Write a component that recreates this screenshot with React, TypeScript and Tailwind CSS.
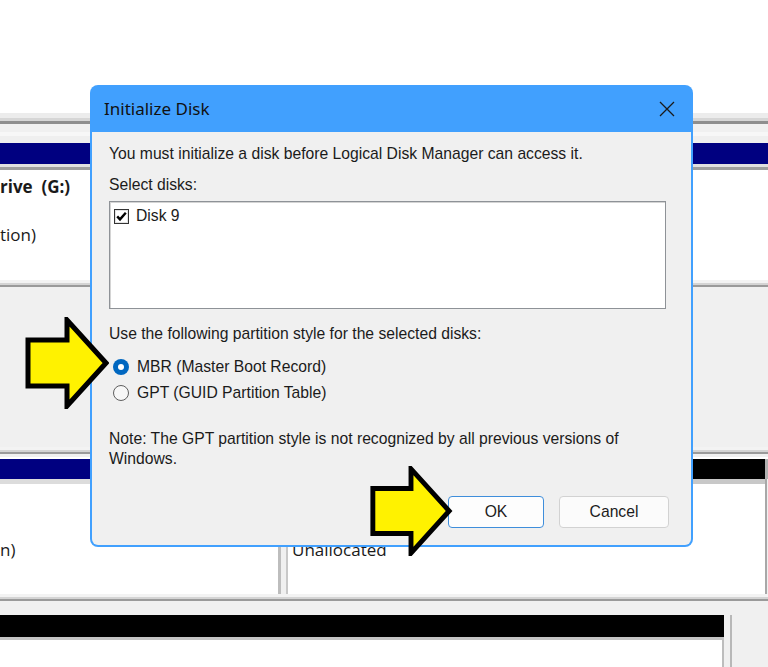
import React from 'react';

// Disk Management window behind the dialog
function Separator() {
  return (
    <div className="flex flex-col">
      <div className="h-[3px] bg-[#f3f3f3]" />
      <div className="h-[2px] bg-[#d4d4d4]" />
      <div className="h-[2px] bg-[#9a9a9a]" />
      <div className="h-[3px] bg-[#f0f0f0]" />
    </div>
  );
}

function Backdrop() {
  return (
    <div className="flex h-[667px] w-[768px] flex-col bg-white font-['Open_Sans',sans-serif] text-[#1a1a1a]">
      <div className="h-[113px] bg-white" />
      {/* toolbar band */}
      <div className="flex h-[30px] flex-col bg-[#efefef]">
        <div className="h-[5px] bg-[#ececec]" />
        <div className="h-[3px] bg-[#d6d6d6]" />
        <div className="h-[3px] bg-[#8e8e8e]" />
        <div className="h-[8px] bg-[#f0f0f0]" />
        <div className="h-[4px] bg-[#f7f7f7]" />
        <div className="flex-1 bg-[#efefef]" />
      </div>
      <div className="h-[21px] bg-[#000080]" />
      <div className="h-[3px] bg-[#e0e0e0]" />
      <div className="h-[3px] bg-[#9e9e9e]" />
      {/* volume panel */}
      <div className="flex h-[110px] flex-col bg-white pt-[5px]">
        <div className="text-[17px] font-bold leading-[24px] whitespace-pre">rive  (G:)</div>
        <div className="mt-[24px] text-[17px] leading-[24px]">tion)</div>
      </div>
      <Separator />
      {/* disk 9 label area */}
      <div className="h-[157px] bg-[#f0f0f0]" />
      <Separator />
      <div className="h-[2px] bg-white" />
      <div className="flex h-[20px]">
        <div className="w-[280px] bg-[#000080]" />
        <div className="w-[6px] bg-white" />
        <div className="w-[479px] bg-black" />
        <div className="flex-1 bg-[#b0b0b0]" />
      </div>
      <div className="flex h-[115px]">
        <div className="flex w-[278px] flex-col border-t-[5px] border-[#dcdcdc] bg-white">
          <div className="mt-[54px] text-[17px] leading-[24px]">n)</div>
        </div>
        <div className="w-[3px] bg-[#bdbdbd]" />
        <div className="w-[5px] bg-[#f0f0f0]" />
        <div className="flex w-[479px] flex-col border-l-2 border-t-[5px] border-[#c8c8c8] bg-white pl-[4px]">
          <div className="mt-[54px] text-[17px] leading-[24px]">Unallocated</div>
        </div>
        <div className="flex-1 border-l-2 border-[#a8a8a8] bg-[#f0f0f0]" />
      </div>
      <Separator />
      <div className="h-[11px] bg-[#f0f0f0]" />
      <div className="flex flex-1">
        <div className="flex w-[724px] flex-col">
          <div className="h-[22px] bg-black" />
          <div className="h-[3px] bg-[#c4c4c4]" />
          <div className="flex-1 border-r-2 border-[#bdbdbd] bg-white" />
        </div>
        <div className="w-[6px] bg-[#f0f0f0]" />
        <div className="w-[2px] bg-[#b8b8b8]" />
        <div className="flex-1 bg-[#f0f0f0]" />
      </div>
    </div>
  );
}

function Arrow({ className }: { className: string }) {
  return (
    <svg viewBox="0 0 84 92" className={className}>
      <path
        d="M3 23 H42 V3 L81 46 L42 89 V69 H3 Z"
        fill="#fff200"
        stroke="#000"
        strokeWidth="5"
        strokeLinejoin="miter"
      />
    </svg>
  );
}

function InitializeDiskDialog() {
  return (
    <div className="absolute left-[90px] top-[85px] flex h-[462px] w-[603px] flex-col overflow-hidden rounded-[8px] bg-[#41a0fe] font-['Liberation_Sans',Arial,sans-serif] text-[15.7px] text-[#1b1b1b]">
      {/* Title bar */}
      <div className="flex h-[47px] items-center justify-between pl-[14px] pr-[18px]">
        <span className="font-['Noto_Sans',sans-serif] text-[17px] text-[#111]">Initialize Disk</span>
        <svg width="16" height="16" viewBox="0 0 16 16">
          <path d="M1 1 L15 15 M15 1 L1 15" stroke="#1a1a1a" strokeWidth="1.3" />
        </svg>
      </div>

      {/* Body */}
      <div className="mx-[2px] mb-[2px] flex flex-1 flex-col rounded-b-[6px] bg-[#f0f0f0] pl-[17px] pr-[22px]">
        <p className="mt-[12px] leading-[20px]">You must initialize a disk before Logical Disk Manager can access it.</p>
        <p className="mt-[11px] leading-[20px]">Select disks:</p>

        <div className="mt-[6px] h-[108px] w-[557px] border border-[#8e9297] bg-white shadow-[inset_1px_1px_0_#d4d4d4]">
          <div className="flex items-center gap-[7px] pl-[4px] pt-[4px]">
            <svg width="15" height="15" viewBox="0 0 15 15">
              <rect x="0.5" y="0.5" width="14" height="14" fill="#fff" stroke="#333" />
              <rect x="1.5" y="1.5" width="12" height="12" fill="none" stroke="#e3e3e3" />
              <path d="M3.2 7.4 L6 10.4 L11.8 3.8" fill="none" stroke="#000" strokeWidth="2.4" />
            </svg>
            <span className="leading-[20px]">Disk 9</span>
          </div>
        </div>

        <p className="mt-[15px] leading-[20px]">Use the following partition style for the selected disks:</p>

        <div className="mt-[13px] flex flex-col gap-[6px] pl-[4px]">
          <div className="flex items-center gap-[8px]">
            <span className="flex h-[16px] w-[16px] items-center justify-center rounded-full bg-[#0067c0]">
              <span className="h-[6px] w-[6px] rounded-full bg-white" />
            </span>
            <span className="leading-[20px]">MBR (Master Boot Record)</span>
          </div>
          <div className="flex items-center gap-[8px]">
            <span className="h-[16px] w-[16px] rounded-full border border-[#5f5f5f] bg-[#f7f7f7]" />
            <span className="leading-[20px]">GPT (GUID Partition Table)</span>
          </div>
        </div>

        <p className="mt-[26px] w-[540px] leading-[20px]">
          Note: The GPT partition style is not recognized by all previous versions of Windows.
        </p>

        <div className="mt-[27px] flex justify-end gap-[15px]">
          <button className="h-[32px] w-[96px] rounded-[4px] border border-[#3f8edb] bg-[#fdfdfd] text-[15.7px] text-[#1b1b1b]">
            OK
          </button>
          <button className="h-[32px] w-[110px] rounded-[4px] border border-[#d2d2d2] bg-[#fbfbfb] text-[15.7px] text-[#1b1b1b]">
            Cancel
          </button>
        </div>
      </div>
    </div>
  );
}

export default function App() {
  return (
    <div className="relative h-[667px] w-[768px] overflow-hidden">
      <Backdrop />
      <InitializeDiskDialog />
      {/* highlight arrows */}
      <Arrow className="absolute left-[25px] top-[317px] h-[92px] w-[84px]" />
      <Arrow className="absolute left-[361px] top-[466px] h-[90px] w-[100px]" />
    </div>
  );
}
